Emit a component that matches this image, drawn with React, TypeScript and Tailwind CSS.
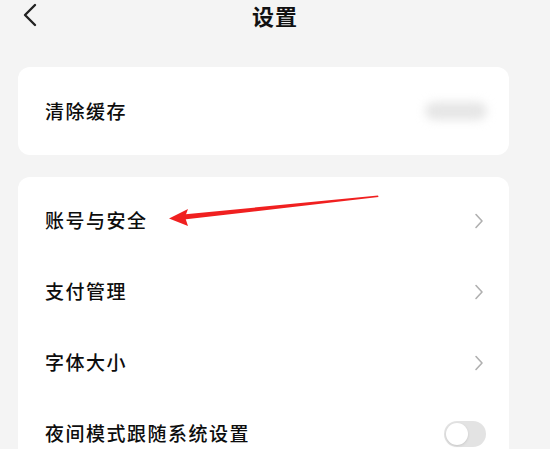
import { type FC } from 'react';

const font = { fontFamily: '"Noto Sans CJK SC", "Noto Sans", sans-serif' };

const Chevron: FC = () => (
    <svg width="10" height="16" viewBox="0 0 10 16" fill="none">
        <path d="M2 1.5 L8 8 L2 14.5" stroke="#b0b0b0" strokeWidth="1.6" strokeLinecap="round" strokeLinejoin="round" />
    </svg>
);

const Row: FC<{ label: string; right?: 'chevron' | 'toggle' }> = ({ label, right = 'chevron' }) => (
    <div className="h-[71px] flex items-center justify-between pl-[27px] pr-[25px]">
        <span className="text-[19px] font-medium tracking-[1.5px] text-[#0d0d0d]">{label}</span>
        {right === 'chevron' ? (
            <Chevron />
        ) : (
            <div className="w-[42px] h-[26px] rounded-full bg-[#e3e3e3] flex items-center px-[2px] -mr-[2px]">
                <div className="w-[22px] h-[22px] rounded-full bg-white shadow-sm" />
            </div>
        )}
    </div>
);

export default function App() {
    return (
        <div className="relative w-[550px] h-[449px] overflow-hidden bg-[#f4f4f4]" style={font}>
            <div className="h-[30px] relative flex items-center justify-center">
                <svg className="absolute left-[22px] top-[3px]" width="16" height="24" viewBox="0 0 16 24" fill="none">
                    <path d="M13 2 L3 12 L13 22" stroke="#222" strokeWidth="2.4" strokeLinecap="round" strokeLinejoin="round" />
                </svg>
                <span className="text-[22px] font-bold text-[#111] tracking-[1px]">设置</span>
            </div>

            <div className="ml-[18px] mt-[37px] w-[491px] h-[88px] bg-white rounded-[12px] flex items-center justify-between pl-[27px] pr-[20px]">
                <span className="text-[19px] font-medium tracking-[1.5px] text-[#0d0d0d]">清除缓存</span>
                <div className="w-[62px] h-[18px] rounded-full bg-[#e6e6e6] blur-[5px] mr-[2px]" />
            </div>

            <div className="ml-[18px] mt-[22px] w-[491px] bg-white rounded-[12px] pt-[8px]">
                <Row label="账号与安全" />
                <Row label="支付管理" />
                <Row label="字体大小" />
                <Row label="夜间模式跟随系统设置" right="toggle" />
            </div>

            <svg className="absolute left-0 top-0 pointer-events-none" width="550" height="449" viewBox="0 0 550 449">
                <polygon points="183,214.5 378,195.5 378.5,197 184,219.5" fill="#f02020" />
                <polygon points="169,218.5 188,209 185,217 188,226" fill="#f02020" />
            </svg>
        </div>
    );
}
